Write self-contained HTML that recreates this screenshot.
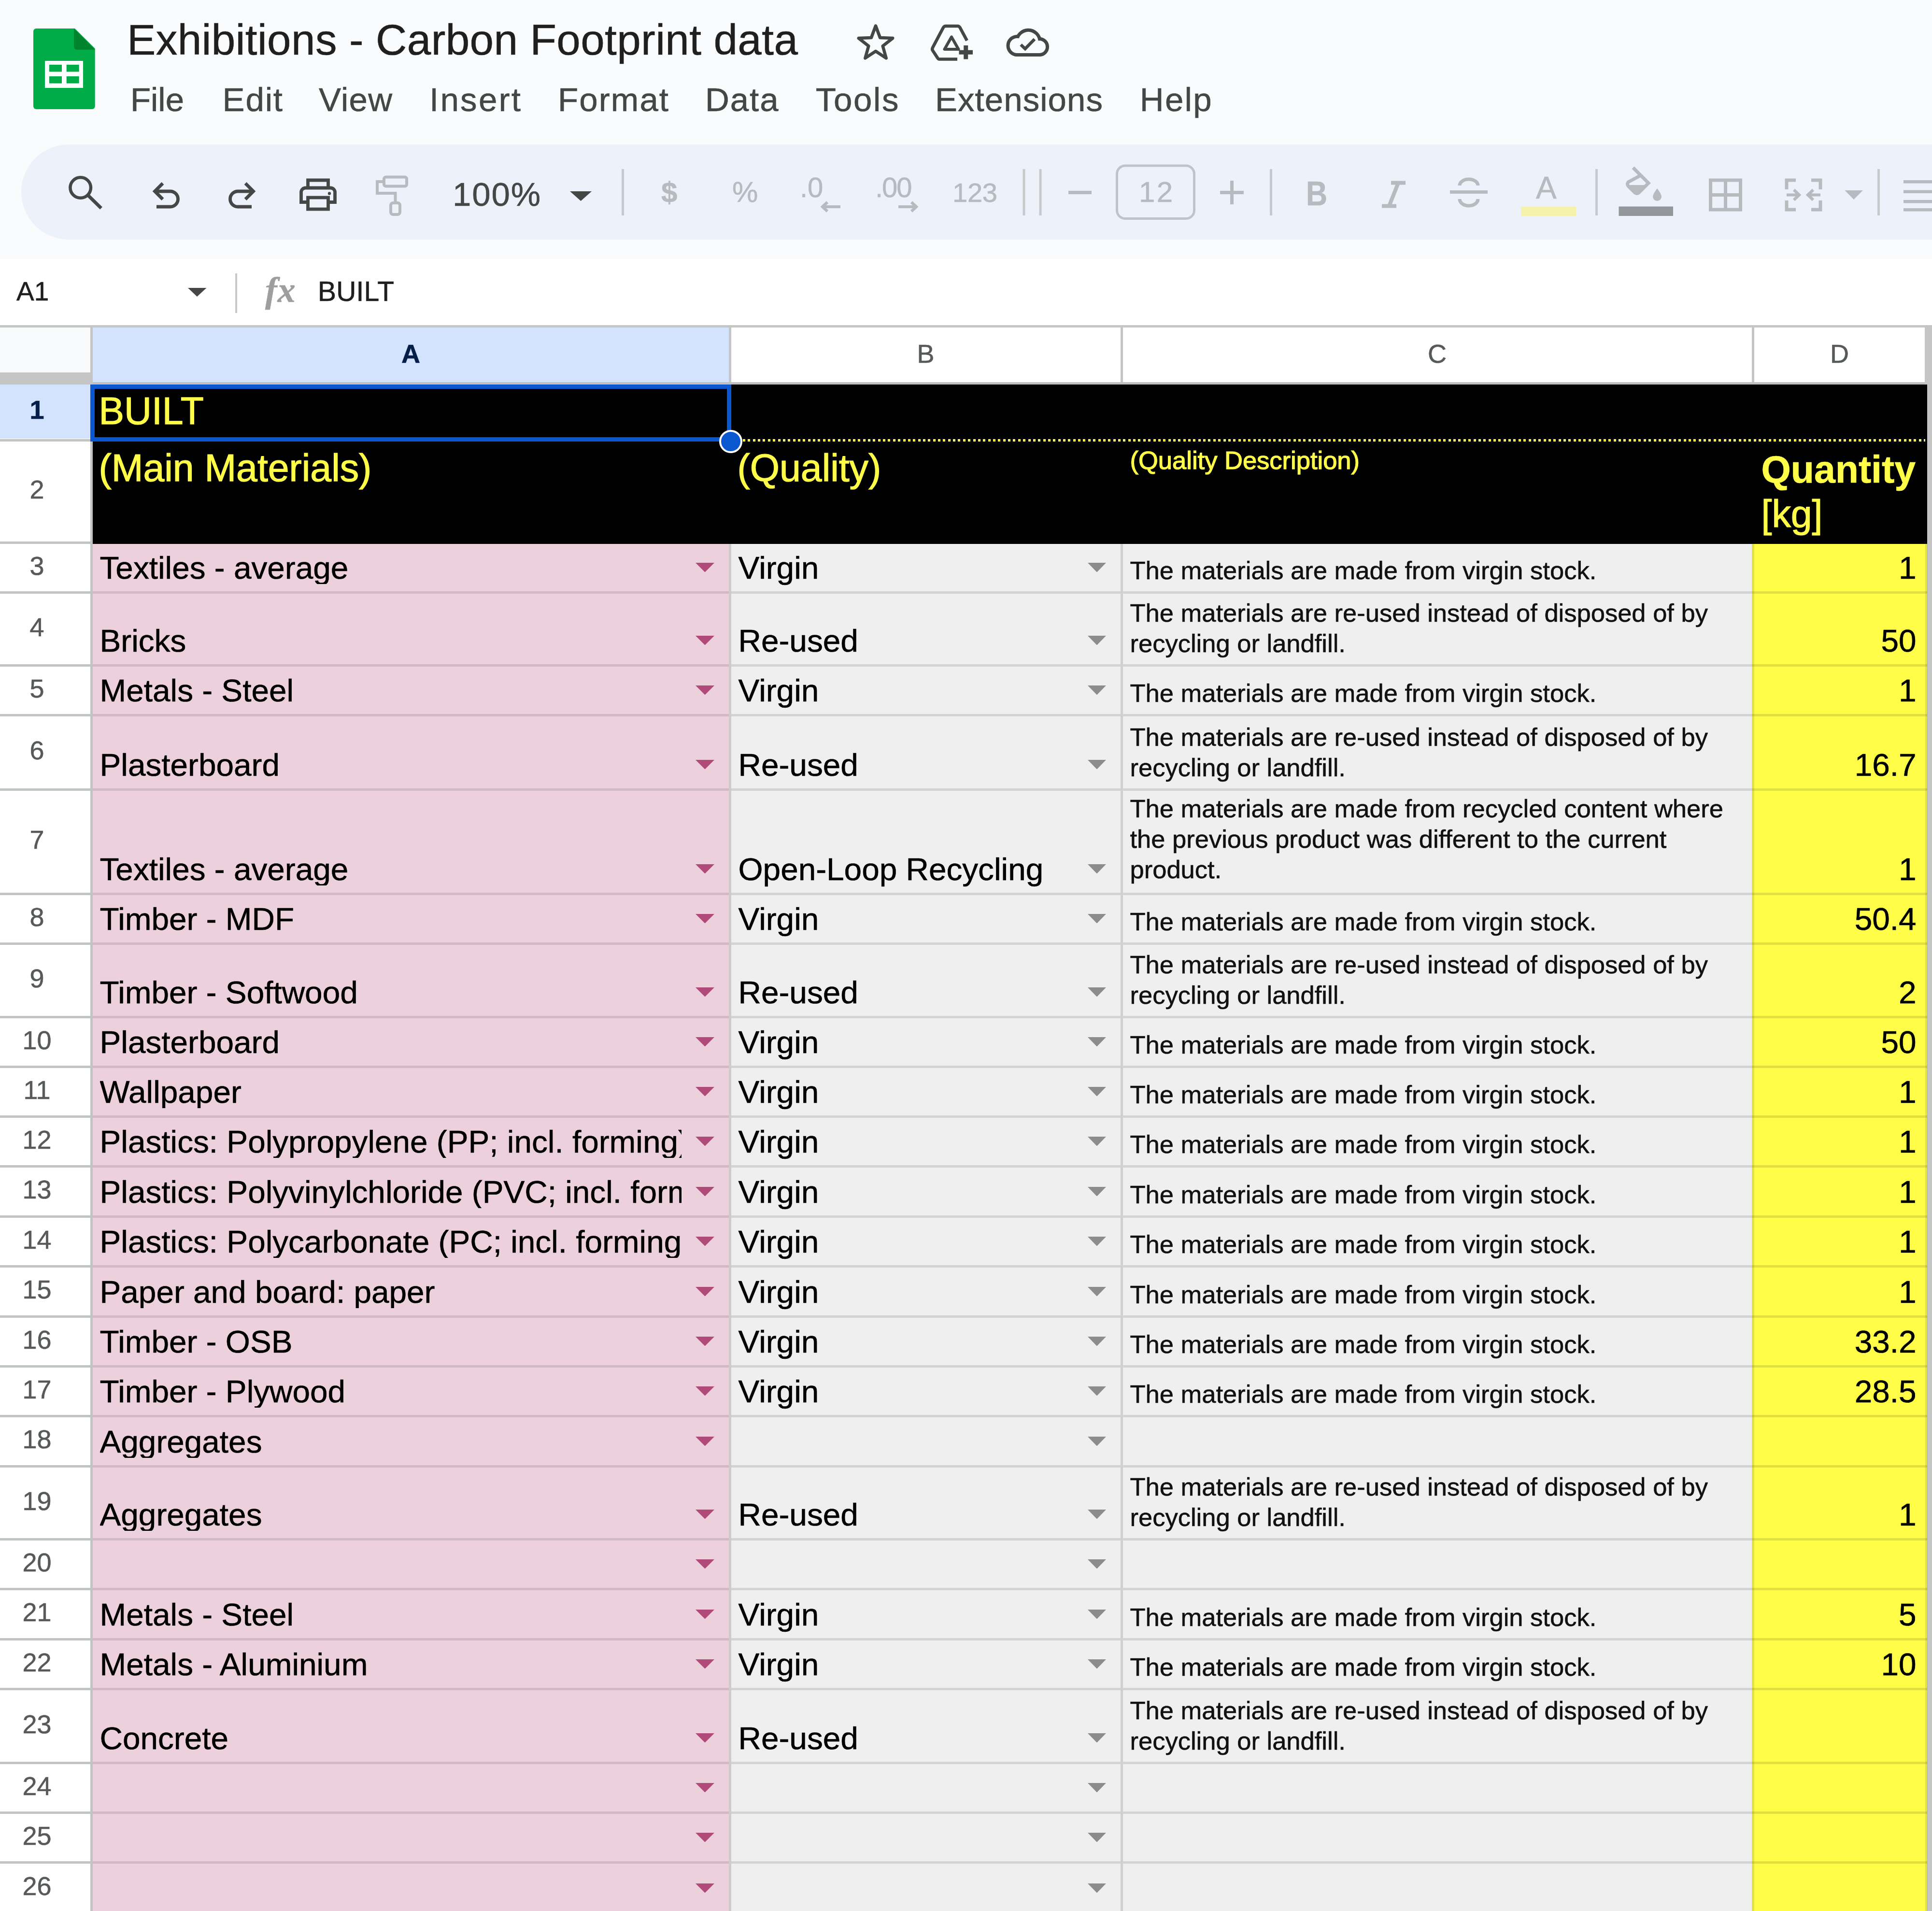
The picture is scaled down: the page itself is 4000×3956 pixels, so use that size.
<!DOCTYPE html>
<html><head><meta charset="utf-8"><title>Exhibitions - Carbon Footprint data</title>
<style>
html,body{margin:0;padding:0;}
body{width:4000px;height:3956px;overflow:hidden;position:relative;background:#fff;font-family:"Liberation Sans",sans-serif;}
.r{position:absolute;display:block;}
.t{position:absolute;white-space:nowrap;line-height:1;font-family:"Liberation Sans",sans-serif;-webkit-text-stroke:0.6px currentColor;}
</style></head><body>
<div class="r" style="left:0.0px;top:0.0px;width:4000.0px;height:535.5px;background:#f9fbfd;"></div>
<div class="r" style="left:44.0px;top:299.0px;width:4100.0px;height:197.0px;background:#edf2fa;border-radius:98.5px;"></div>
<svg class="r" style="left:60px;top:50px" width="150" height="190" viewBox="60 50 150 190">
<path d="M75 59 H155 L196.7 100.5 V220 a6 6 0 0 1 -6 6 H75 a6 6 0 0 1 -6 -6 V65 a6 6 0 0 1 6 -6 Z" fill="#00ac47"/>
<path d="M153 59 L196.7 102.8 H159 a6 6 0 0 1 -6 -6 Z" fill="#00832d"/>
<rect x="93" y="126" width="79" height="56" fill="#fff"/>
<rect x="102" y="134" width="26" height="14.5" fill="#00ac47"/>
<rect x="137.7" y="134" width="26" height="14.5" fill="#00ac47"/>
<rect x="102" y="158" width="26" height="14.5" fill="#00ac47"/>
<rect x="137.7" y="158" width="26" height="14.5" fill="#00ac47"/>
</svg>
<div class="t " style="top:37.7px;font-size:89px;color:#1f1f1f;left:263.0px;letter-spacing:0.40px;">Exhibitions - Carbon Footprint data</div>
<div class="t " style="top:171.6px;font-size:69px;color:#444746;left:270.0px;letter-spacing:-0.06px;">File</div>
<div class="t " style="top:171.6px;font-size:69px;color:#444746;left:460.5px;letter-spacing:1.87px;">Edit</div>
<div class="t " style="top:171.6px;font-size:69px;color:#444746;left:660.0px;letter-spacing:1.23px;">View</div>
<div class="t " style="top:171.6px;font-size:69px;color:#444746;left:889.0px;letter-spacing:3.29px;">Insert</div>
<div class="t " style="top:171.6px;font-size:69px;color:#444746;left:1155.0px;letter-spacing:2.10px;">Format</div>
<div class="t " style="top:171.6px;font-size:69px;color:#444746;left:1460.0px;letter-spacing:1.95px;">Data</div>
<div class="t " style="top:171.6px;font-size:69px;color:#444746;left:1688.7px;letter-spacing:2.71px;">Tools</div>
<div class="t " style="top:171.6px;font-size:69px;color:#444746;left:1936.0px;letter-spacing:1.05px;">Extensions</div>
<div class="t " style="top:171.6px;font-size:69px;color:#444746;left:2359.7px;letter-spacing:2.36px;">Help</div>
<svg class="r" style="left:0;top:0" width="4000" height="536" viewBox="0 0 4000 536"><path d="M1813.0 53.5 L1822.1 78.0 L1848.2 79.1 L1827.7 95.3 L1834.7 120.4 L1813.0 106.0 L1791.3 120.4 L1798.3 95.3 L1777.8 79.1 L1803.9 78.0 Z" fill="none" stroke="#444746" stroke-width="6.5" stroke-linejoin="round"/><path d="M2002 84 L1987.5 57 a6 6 0 0 0 -5 -3 H1958 a6 6 0 0 0 -5 3 L1931 98.5 a6 6 0 0 0 0 6 L1941.5 120.5 a4 4 0 0 0 3.5 2 H1982" fill="none" stroke="#444746" stroke-width="6.5" stroke-linejoin="round" stroke-linecap="butt"/><path d="M1970 76.5 L1955.5 102 H1984.5 Z" fill="none" stroke="#444746" stroke-width="6" stroke-linejoin="round"/><path d="M1999.7 94 V122.5 M1985.5 108.2 H2014" fill="none" stroke="#444746" stroke-width="9"/><g stroke="#444746" stroke-width="14" fill="#444746" stroke-linejoin="round"><circle cx="2106" cy="94.5" r="15.5"/><circle cx="2129" cy="86.5" r="20.7"/><circle cx="2152" cy="97" r="13"/><rect x="2106" y="95" width="46" height="15"/></g><g fill="#f9fbfd"><circle cx="2106" cy="94.5" r="15.5"/><circle cx="2129" cy="86.5" r="20.7"/><circle cx="2152" cy="97" r="13"/><rect x="2106" y="95" width="46" height="15"/></g><path d="M2113.5 92.5 L2122.5 101 L2142 81" fill="none" stroke="#444746" stroke-width="6.5"/><circle cx="166.7" cy="388.5" r="21.3" fill="none" stroke="#444746" stroke-width="6.5"/><path d="M182.5 404.5 L209.5 431" stroke="#444746" stroke-width="7"/><path d="M324 428 H352.5 a16 16 0 0 0 0 -32 H320" fill="none" stroke="#444746" stroke-width="6.8"/><path d="M337 379.5 L320.5 396 L337 412.5" fill="none" stroke="#444746" stroke-width="6.8"/><path d="M521 428 H492.5 a16 16 0 0 1 0 -32 H525" fill="none" stroke="#444746" stroke-width="6.8"/><path d="M508 379.5 L524.5 396 L508 412.5" fill="none" stroke="#444746" stroke-width="6.8"/><path d="M637.5 388 V373 H679.5 V388" fill="none" stroke="#444746" stroke-width="6.8"/><path d="M637.5 418.5 H623.5 V398 a9 9 0 0 1 9 -9 H684.5 a9 9 0 0 1 9 9 V418.5 H679.5" fill="none" stroke="#444746" stroke-width="6.8"/><rect x="637.5" y="409" width="42" height="24" fill="none" stroke="#444746" stroke-width="6.8"/><circle cx="682" cy="400.5" r="3.2" fill="#444746"/><rect x="795" y="366.5" width="47" height="19" rx="4" fill="none" stroke="#b7babf" stroke-width="6"/><path d="M795 376 H781 V400 H818.5 V419" fill="none" stroke="#b7babf" stroke-width="6"/><rect x="809" y="420" width="19" height="24" rx="5" fill="none" stroke="#b7babf" stroke-width="6"/><path d="M1180 396 L1225 396 L1202.5 416 Z" fill="#444746"/><rect x="1287.0" y="350" width="5" height="96" fill="#c7c9cc"/><rect x="2117.5" y="350" width="5" height="96" fill="#c7c9cc"/><rect x="2151.5" y="350" width="5" height="96" fill="#c7c9cc"/><rect x="2629.0" y="350" width="5" height="96" fill="#c7c9cc"/><rect x="3303.0" y="350" width="5" height="96" fill="#c7c9cc"/><rect x="3887.0" y="350" width="5" height="96" fill="#c7c9cc"/><path d="M1703 428 H1740 M1713 418.5 L1703 428 L1713 437.5" fill="none" stroke="#b7babf" stroke-width="6"/><path d="M1860 428 H1897 M1887 418.5 L1897 428 L1887 437.5" fill="none" stroke="#b7babf" stroke-width="6"/><rect x="2212" y="395" width="48" height="7" fill="#b7babf"/><rect x="2526" y="395" width="49" height="7" fill="#b7babf"/><rect x="2547" y="374" width="7" height="49" fill="#b7babf"/><rect x="2312.5" y="343" width="160" height="109.5" rx="17" fill="none" stroke="#c0c3c8" stroke-width="5"/><path d="M2880 378.5 H2910 M2861 426.5 H2891 M2895 378.5 L2876 426.5" fill="none" stroke="#b7babf" stroke-width="8"/><rect x="3002" y="394" width="78" height="7" fill="#b7babf"/><path d="M3060 384 a19 13 0 0 0 -38 0 M3022 412 a19 14 0 0 0 38 0" fill="none" stroke="#b7babf" stroke-width="7"/><rect x="3149" y="427.5" width="114" height="19.5" fill="#f4f3ae"/><rect x="3351.5" y="427.5" width="112.5" height="19.5" fill="#93969a"/><path d="M3381 347 L3413 379 L3393 399 a6 6 0 0 1 -8 0 L3371 385 a6 6 0 0 1 0 -8 L3397 363" fill="none" stroke="#b7babf" stroke-width="7"/><path d="M3372 383 H3411 L3391 402 Z" fill="#b7babf"/><path d="M3431 390 q9 12 9 17 a9 9 0 0 1 -18 0 q0 -5 9 -17 Z" fill="#b7babf"/><rect x="3541.5" y="373" width="62" height="61" fill="none" stroke="#b7babf" stroke-width="7"/><path d="M3572.5 373 V434 M3541.5 403.5 H3603.5" stroke="#b7babf" stroke-width="7"/><path d="M3718 373 H3699 V392 M3699 415 V434 H3718 M3750 373 H3769 V392 M3769 415 V434 H3750" fill="none" stroke="#b7babf" stroke-width="7"/><path d="M3699 403.5 H3724 M3714 393 L3725 403.5 L3714 414 M3769 403.5 H3744 M3754 393 L3743 403.5 L3754 414" fill="none" stroke="#b7babf" stroke-width="6"/><path d="M3819.5 394 H3857 L3838 413 Z" fill="#b7babf"/><rect x="3941" y="373" width="70" height="6.5" fill="#b7babf"/><rect x="3941" y="393.5" width="70" height="6.5" fill="#b7babf"/><rect x="3941" y="414" width="70" height="6.5" fill="#b7babf"/><rect x="3941" y="431" width="70" height="6.5" fill="#b7babf"/></svg>
<div class="t " style="top:367.6px;font-size:69px;color:#444746;left:937.0px;letter-spacing:1.84px;">100%</div>
<div class="t " style="top:369.2px;font-size:60px;color:#b7babf;left:1369.0px;font-weight:bold;">$</div>
<div class="t " style="top:368.2px;font-size:60px;color:#b7babf;left:1516.0px;">%</div>
<div class="t " style="top:358.9px;font-size:58px;color:#b7babf;left:1656.0px;">.0</div>
<div class="t " style="top:358.9px;font-size:58px;color:#b7babf;left:1812.0px;letter-spacing:-2.00px;">.00</div>
<div class="t " style="top:370.6px;font-size:56px;color:#b7babf;left:1972.0px;letter-spacing:-0.22px;">123</div>
<div class="t " style="top:368.2px;font-size:60px;color:#b7babf;left:2358.0px;letter-spacing:3.26px;">12</div>
<div class="t " style="top:364.9px;font-size:71px;color:#b7babf;left:2704.0px;font-weight:bold;transform:scaleX(0.86);transform-origin:0 0;">B</div>
<div class="t " style="top:356.8px;font-size:64px;color:#b7babf;left:3180.0px;">A</div>
<div class="r" style="left:0.0px;top:535.5px;width:4000.0px;height:138.0px;background:#fff;"></div>
<div class="t " style="top:575.9px;font-size:55px;color:#1f1f1f;left:34.0px;">A1</div>
<svg class="r" style="left:380px;top:590px" width="60" height="30" viewBox="380 590 60 30"><path d="M389 596 H427.5 L408 614 Z" fill="#444746"/></svg>
<div class="r" style="left:486.5px;top:565.5px;width:4.5px;height:82.5px;background:#c7c7c7;"></div>
<div class="t " style="top:563.4px;font-size:74px;color:#9e9e9e;left:549.0px;font-weight:bold;font-style:italic;font-family:'Liberation Serif',serif;letter-spacing:1px;">fx</div>
<div class="t " style="top:575.2px;font-size:57px;color:#1f1f1f;left:658.0px;letter-spacing:0.17px;">BUILT</div>
<div class="r" style="left:0.0px;top:673.0px;width:4000.0px;height:5.0px;background:#c4c7c5;"></div>
<div class="r" style="left:0.0px;top:678.0px;width:187.0px;height:93.0px;background:#f8f9fa;"></div>
<div class="r" style="left:0.0px;top:771.0px;width:192.0px;height:24.5px;background:#c5c5c5;"></div>
<div class="r" style="left:187.0px;top:678.0px;width:5.0px;height:117.0px;background:#c5c5c5;"></div>
<div class="r" style="left:191.5px;top:678.0px;width:1317.0px;height:113.0px;background:#d3e3fd;"></div>
<div class="r" style="left:1513.5px;top:678.0px;width:806.0px;height:113.0px;background:#fff;"></div>
<div class="r" style="left:2324.5px;top:678.0px;width:1302.5px;height:113.0px;background:#fff;"></div>
<div class="r" style="left:3631.5px;top:678.0px;width:354.0px;height:113.0px;background:#fff;"></div>
<div class="r" style="left:1508.5px;top:678.0px;width:5.0px;height:113.0px;background:#c5c5c5;"></div>
<div class="r" style="left:2319.5px;top:678.0px;width:5.0px;height:113.0px;background:#c5c5c5;"></div>
<div class="r" style="left:3627.0px;top:678.0px;width:5.0px;height:113.0px;background:#c5c5c5;"></div>
<div class="r" style="left:191.5px;top:790.5px;width:4000.0px;height:5.5px;background:#c0c0c0;"></div>
<div class="r" style="left:3984.5px;top:673.0px;width:20.0px;height:3300.0px;background:#c5c5c5;"></div>
<div class="t " style="top:705.3px;font-size:54px;color:#041e49;left:831.0px;font-weight:bold;">A</div>
<div class="t " style="top:705.3px;font-size:54px;color:#575a5a;left:1898.5px;">B</div>
<div class="t " style="top:705.3px;font-size:54px;color:#575a5a;left:2956.0px;">C</div>
<div class="t " style="top:705.3px;font-size:54px;color:#575a5a;left:3789.0px;">D</div>
<div class="r" style="left:0.0px;top:796.0px;width:187.0px;height:112.0px;background:#d3e3fd;"></div>
<div class="r" style="left:0.0px;top:909.0px;width:187.0px;height:5.0px;background:#c0c4c2;"></div>
<div class="t " style="top:821.3px;font-size:54px;color:#041e49;left:61.5px;font-weight:bold;">1</div>
<div class="r" style="left:191.5px;top:796.0px;width:3798.5px;height:118.0px;background:#000;"></div>
<div class="r" style="left:0.0px;top:914.0px;width:187.0px;height:207.0px;background:#fff;"></div>
<div class="r" style="left:0.0px;top:1121.0px;width:187.0px;height:5.0px;background:#c0c4c2;"></div>
<div class="t " style="top:986.3px;font-size:54px;color:#575a5a;left:61.5px;">2</div>
<div class="r" style="left:191.5px;top:914.0px;width:3798.5px;height:212.0px;background:#000;"></div>
<div class="r" style="left:0.0px;top:1126.0px;width:187.0px;height:98.0px;background:#fff;"></div>
<div class="r" style="left:0.0px;top:1224.0px;width:187.0px;height:5.0px;background:#c0c4c2;"></div>
<div class="t " style="top:1143.8px;font-size:54px;color:#575a5a;left:61.5px;">3</div>
<div class="r" style="left:191.5px;top:1126.0px;width:1322.0px;height:103.0px;background:#ecd1dc;"></div>
<div class="r" style="left:1513.5px;top:1126.0px;width:2113.5px;height:103.0px;background:#efefef;"></div>
<div class="r" style="left:3627.0px;top:1126.0px;width:363.0px;height:103.0px;background:#fffd47;"></div>
<div class="r" style="left:191.5px;top:1224.0px;width:3798.5px;height:5.0px;background:rgba(0,0,0,0.115);"></div>
<div class="t " style="top:1143.4px;font-size:65.7px;color:#000;left:206.5px;width:1204.0px;overflow:hidden;">Textiles - average</div>
<div class="t " style="top:1143.4px;font-size:65.7px;color:#000;left:1528.5px;">Virgin</div>
<div class="t " style="top:1154.6px;font-size:52.5px;color:#111;left:2339.5px;">The materials are made from virgin stock.</div>
<div class="t " style="top:1143.4px;font-size:65.7px;color:#000;right:32.5px;">1</div>
<svg class="r" style="left:1440px;top:1164.5px" width="39" height="19.5" viewBox="0 0 39 19.5"><path d="M0 0 H39 L19.5 19.5 Z" fill="#b04a78"/></svg>
<svg class="r" style="left:2251.5px;top:1164.5px" width="38" height="19.5" viewBox="0 0 38 19.5"><path d="M0 0 H38 L19 19.5 Z" fill="#8c8c8c"/></svg>
<div class="r" style="left:0.0px;top:1229.0px;width:187.0px;height:146.0px;background:#fff;"></div>
<div class="r" style="left:0.0px;top:1375.0px;width:187.0px;height:5.0px;background:#c0c4c2;"></div>
<div class="t " style="top:1270.8px;font-size:54px;color:#575a5a;left:61.5px;">4</div>
<div class="r" style="left:191.5px;top:1229.0px;width:1322.0px;height:151.0px;background:#ecd1dc;"></div>
<div class="r" style="left:1513.5px;top:1229.0px;width:2113.5px;height:151.0px;background:#efefef;"></div>
<div class="r" style="left:3627.0px;top:1229.0px;width:363.0px;height:151.0px;background:#fffd47;"></div>
<div class="r" style="left:191.5px;top:1375.0px;width:3798.5px;height:5.0px;background:rgba(0,0,0,0.115);"></div>
<div class="t " style="top:1294.4px;font-size:65.7px;color:#000;left:206.5px;width:1204.0px;overflow:hidden;">Bricks</div>
<div class="t " style="top:1294.4px;font-size:65.7px;color:#000;left:1528.5px;">Re-used</div>
<div class="t " style="top:1242.6px;font-size:52.5px;color:#111;left:2339.5px;">The materials are re-used instead of disposed of by</div>
<div class="t " style="top:1305.6px;font-size:52.5px;color:#111;left:2339.5px;">recycling or landfill.</div>
<div class="t " style="top:1294.4px;font-size:65.7px;color:#000;right:32.5px;">50</div>
<svg class="r" style="left:1440px;top:1315.5px" width="39" height="19.5" viewBox="0 0 39 19.5"><path d="M0 0 H39 L19.5 19.5 Z" fill="#b04a78"/></svg>
<svg class="r" style="left:2251.5px;top:1315.5px" width="38" height="19.5" viewBox="0 0 38 19.5"><path d="M0 0 H38 L19 19.5 Z" fill="#8c8c8c"/></svg>
<div class="r" style="left:0.0px;top:1380.0px;width:187.0px;height:98.0px;background:#fff;"></div>
<div class="r" style="left:0.0px;top:1478.0px;width:187.0px;height:5.0px;background:#c0c4c2;"></div>
<div class="t " style="top:1397.8px;font-size:54px;color:#575a5a;left:61.5px;">5</div>
<div class="r" style="left:191.5px;top:1380.0px;width:1322.0px;height:103.0px;background:#ecd1dc;"></div>
<div class="r" style="left:1513.5px;top:1380.0px;width:2113.5px;height:103.0px;background:#efefef;"></div>
<div class="r" style="left:3627.0px;top:1380.0px;width:363.0px;height:103.0px;background:#fffd47;"></div>
<div class="r" style="left:191.5px;top:1478.0px;width:3798.5px;height:5.0px;background:rgba(0,0,0,0.115);"></div>
<div class="t " style="top:1397.4px;font-size:65.7px;color:#000;left:206.5px;width:1204.0px;overflow:hidden;">Metals - Steel</div>
<div class="t " style="top:1397.4px;font-size:65.7px;color:#000;left:1528.5px;">Virgin</div>
<div class="t " style="top:1408.6px;font-size:52.5px;color:#111;left:2339.5px;">The materials are made from virgin stock.</div>
<div class="t " style="top:1397.4px;font-size:65.7px;color:#000;right:32.5px;">1</div>
<svg class="r" style="left:1440px;top:1418.5px" width="39" height="19.5" viewBox="0 0 39 19.5"><path d="M0 0 H39 L19.5 19.5 Z" fill="#b04a78"/></svg>
<svg class="r" style="left:2251.5px;top:1418.5px" width="38" height="19.5" viewBox="0 0 38 19.5"><path d="M0 0 H38 L19 19.5 Z" fill="#8c8c8c"/></svg>
<div class="r" style="left:0.0px;top:1483.0px;width:187.0px;height:149.0px;background:#fff;"></div>
<div class="r" style="left:0.0px;top:1632.0px;width:187.0px;height:5.0px;background:#c0c4c2;"></div>
<div class="t " style="top:1526.3px;font-size:54px;color:#575a5a;left:61.5px;">6</div>
<div class="r" style="left:191.5px;top:1483.0px;width:1322.0px;height:154.0px;background:#ecd1dc;"></div>
<div class="r" style="left:1513.5px;top:1483.0px;width:2113.5px;height:154.0px;background:#efefef;"></div>
<div class="r" style="left:3627.0px;top:1483.0px;width:363.0px;height:154.0px;background:#fffd47;"></div>
<div class="r" style="left:191.5px;top:1632.0px;width:3798.5px;height:5.0px;background:rgba(0,0,0,0.115);"></div>
<div class="t " style="top:1551.4px;font-size:65.7px;color:#000;left:206.5px;width:1204.0px;overflow:hidden;">Plasterboard</div>
<div class="t " style="top:1551.4px;font-size:65.7px;color:#000;left:1528.5px;">Re-used</div>
<div class="t " style="top:1499.6px;font-size:52.5px;color:#111;left:2339.5px;">The materials are re-used instead of disposed of by</div>
<div class="t " style="top:1562.6px;font-size:52.5px;color:#111;left:2339.5px;">recycling or landfill.</div>
<div class="t " style="top:1551.4px;font-size:65.7px;color:#000;right:32.5px;">16.7</div>
<svg class="r" style="left:1440px;top:1572.5px" width="39" height="19.5" viewBox="0 0 39 19.5"><path d="M0 0 H39 L19.5 19.5 Z" fill="#b04a78"/></svg>
<svg class="r" style="left:2251.5px;top:1572.5px" width="38" height="19.5" viewBox="0 0 38 19.5"><path d="M0 0 H38 L19 19.5 Z" fill="#8c8c8c"/></svg>
<div class="r" style="left:0.0px;top:1637.0px;width:187.0px;height:211.0px;background:#fff;"></div>
<div class="r" style="left:0.0px;top:1848.0px;width:187.0px;height:5.0px;background:#c0c4c2;"></div>
<div class="t " style="top:1711.3px;font-size:54px;color:#575a5a;left:61.5px;">7</div>
<div class="r" style="left:191.5px;top:1637.0px;width:1322.0px;height:216.0px;background:#ecd1dc;"></div>
<div class="r" style="left:1513.5px;top:1637.0px;width:2113.5px;height:216.0px;background:#efefef;"></div>
<div class="r" style="left:3627.0px;top:1637.0px;width:363.0px;height:216.0px;background:#fffd47;"></div>
<div class="r" style="left:191.5px;top:1848.0px;width:3798.5px;height:5.0px;background:rgba(0,0,0,0.115);"></div>
<div class="t " style="top:1767.4px;font-size:65.7px;color:#000;left:206.5px;width:1204.0px;overflow:hidden;">Textiles - average</div>
<div class="t " style="top:1767.4px;font-size:65.7px;color:#000;left:1528.5px;">Open-Loop Recycling</div>
<div class="t " style="top:1647.6px;font-size:52.5px;color:#111;left:2339.5px;">The materials are made from recycled content where</div>
<div class="t " style="top:1710.6px;font-size:52.5px;color:#111;left:2339.5px;">the previous product was different to the current</div>
<div class="t " style="top:1773.6px;font-size:52.5px;color:#111;left:2339.5px;">product.</div>
<div class="t " style="top:1767.4px;font-size:65.7px;color:#000;right:32.5px;">1</div>
<svg class="r" style="left:1440px;top:1788.5px" width="39" height="19.5" viewBox="0 0 39 19.5"><path d="M0 0 H39 L19.5 19.5 Z" fill="#b04a78"/></svg>
<svg class="r" style="left:2251.5px;top:1788.5px" width="38" height="19.5" viewBox="0 0 38 19.5"><path d="M0 0 H38 L19 19.5 Z" fill="#8c8c8c"/></svg>
<div class="r" style="left:0.0px;top:1853.0px;width:187.0px;height:98.0px;background:#fff;"></div>
<div class="r" style="left:0.0px;top:1951.0px;width:187.0px;height:5.0px;background:#c0c4c2;"></div>
<div class="t " style="top:1870.8px;font-size:54px;color:#575a5a;left:61.5px;">8</div>
<div class="r" style="left:191.5px;top:1853.0px;width:1322.0px;height:103.0px;background:#ecd1dc;"></div>
<div class="r" style="left:1513.5px;top:1853.0px;width:2113.5px;height:103.0px;background:#efefef;"></div>
<div class="r" style="left:3627.0px;top:1853.0px;width:363.0px;height:103.0px;background:#fffd47;"></div>
<div class="r" style="left:191.5px;top:1951.0px;width:3798.5px;height:5.0px;background:rgba(0,0,0,0.115);"></div>
<div class="t " style="top:1870.4px;font-size:65.7px;color:#000;left:206.5px;width:1204.0px;overflow:hidden;">Timber - MDF</div>
<div class="t " style="top:1870.4px;font-size:65.7px;color:#000;left:1528.5px;">Virgin</div>
<div class="t " style="top:1881.6px;font-size:52.5px;color:#111;left:2339.5px;">The materials are made from virgin stock.</div>
<div class="t " style="top:1870.4px;font-size:65.7px;color:#000;right:32.5px;">50.4</div>
<svg class="r" style="left:1440px;top:1891.5px" width="39" height="19.5" viewBox="0 0 39 19.5"><path d="M0 0 H39 L19.5 19.5 Z" fill="#b04a78"/></svg>
<svg class="r" style="left:2251.5px;top:1891.5px" width="38" height="19.5" viewBox="0 0 38 19.5"><path d="M0 0 H38 L19 19.5 Z" fill="#8c8c8c"/></svg>
<div class="r" style="left:0.0px;top:1956.0px;width:187.0px;height:147.0px;background:#fff;"></div>
<div class="r" style="left:0.0px;top:2103.0px;width:187.0px;height:5.0px;background:#c0c4c2;"></div>
<div class="t " style="top:1998.3px;font-size:54px;color:#575a5a;left:61.5px;">9</div>
<div class="r" style="left:191.5px;top:1956.0px;width:1322.0px;height:152.0px;background:#ecd1dc;"></div>
<div class="r" style="left:1513.5px;top:1956.0px;width:2113.5px;height:152.0px;background:#efefef;"></div>
<div class="r" style="left:3627.0px;top:1956.0px;width:363.0px;height:152.0px;background:#fffd47;"></div>
<div class="r" style="left:191.5px;top:2103.0px;width:3798.5px;height:5.0px;background:rgba(0,0,0,0.115);"></div>
<div class="t " style="top:2022.4px;font-size:65.7px;color:#000;left:206.5px;width:1204.0px;overflow:hidden;">Timber - Softwood</div>
<div class="t " style="top:2022.4px;font-size:65.7px;color:#000;left:1528.5px;">Re-used</div>
<div class="t " style="top:1970.6px;font-size:52.5px;color:#111;left:2339.5px;">The materials are re-used instead of disposed of by</div>
<div class="t " style="top:2033.6px;font-size:52.5px;color:#111;left:2339.5px;">recycling or landfill.</div>
<div class="t " style="top:2022.4px;font-size:65.7px;color:#000;right:32.5px;">2</div>
<svg class="r" style="left:1440px;top:2043.5px" width="39" height="19.5" viewBox="0 0 39 19.5"><path d="M0 0 H39 L19.5 19.5 Z" fill="#b04a78"/></svg>
<svg class="r" style="left:2251.5px;top:2043.5px" width="38" height="19.5" viewBox="0 0 38 19.5"><path d="M0 0 H38 L19 19.5 Z" fill="#8c8c8c"/></svg>
<div class="r" style="left:0.0px;top:2108.0px;width:187.0px;height:98.0px;background:#fff;"></div>
<div class="r" style="left:0.0px;top:2206.0px;width:187.0px;height:5.0px;background:#c0c4c2;"></div>
<div class="t " style="top:2125.8px;font-size:54px;color:#575a5a;left:46.5px;">10</div>
<div class="r" style="left:191.5px;top:2108.0px;width:1322.0px;height:103.0px;background:#ecd1dc;"></div>
<div class="r" style="left:1513.5px;top:2108.0px;width:2113.5px;height:103.0px;background:#efefef;"></div>
<div class="r" style="left:3627.0px;top:2108.0px;width:363.0px;height:103.0px;background:#fffd47;"></div>
<div class="r" style="left:191.5px;top:2206.0px;width:3798.5px;height:5.0px;background:rgba(0,0,0,0.115);"></div>
<div class="t " style="top:2125.4px;font-size:65.7px;color:#000;left:206.5px;width:1204.0px;overflow:hidden;">Plasterboard</div>
<div class="t " style="top:2125.4px;font-size:65.7px;color:#000;left:1528.5px;">Virgin</div>
<div class="t " style="top:2136.6px;font-size:52.5px;color:#111;left:2339.5px;">The materials are made from virgin stock.</div>
<div class="t " style="top:2125.4px;font-size:65.7px;color:#000;right:32.5px;">50</div>
<svg class="r" style="left:1440px;top:2146.5px" width="39" height="19.5" viewBox="0 0 39 19.5"><path d="M0 0 H39 L19.5 19.5 Z" fill="#b04a78"/></svg>
<svg class="r" style="left:2251.5px;top:2146.5px" width="38" height="19.5" viewBox="0 0 38 19.5"><path d="M0 0 H38 L19 19.5 Z" fill="#8c8c8c"/></svg>
<div class="r" style="left:0.0px;top:2211.0px;width:187.0px;height:98.0px;background:#fff;"></div>
<div class="r" style="left:0.0px;top:2309.0px;width:187.0px;height:5.0px;background:#c0c4c2;"></div>
<div class="t " style="top:2228.8px;font-size:54px;color:#575a5a;left:48.5px;">11</div>
<div class="r" style="left:191.5px;top:2211.0px;width:1322.0px;height:103.0px;background:#ecd1dc;"></div>
<div class="r" style="left:1513.5px;top:2211.0px;width:2113.5px;height:103.0px;background:#efefef;"></div>
<div class="r" style="left:3627.0px;top:2211.0px;width:363.0px;height:103.0px;background:#fffd47;"></div>
<div class="r" style="left:191.5px;top:2309.0px;width:3798.5px;height:5.0px;background:rgba(0,0,0,0.115);"></div>
<div class="t " style="top:2228.4px;font-size:65.7px;color:#000;left:206.5px;width:1204.0px;overflow:hidden;">Wallpaper</div>
<div class="t " style="top:2228.4px;font-size:65.7px;color:#000;left:1528.5px;">Virgin</div>
<div class="t " style="top:2239.6px;font-size:52.5px;color:#111;left:2339.5px;">The materials are made from virgin stock.</div>
<div class="t " style="top:2228.4px;font-size:65.7px;color:#000;right:32.5px;">1</div>
<svg class="r" style="left:1440px;top:2249.5px" width="39" height="19.5" viewBox="0 0 39 19.5"><path d="M0 0 H39 L19.5 19.5 Z" fill="#b04a78"/></svg>
<svg class="r" style="left:2251.5px;top:2249.5px" width="38" height="19.5" viewBox="0 0 38 19.5"><path d="M0 0 H38 L19 19.5 Z" fill="#8c8c8c"/></svg>
<div class="r" style="left:0.0px;top:2314.0px;width:187.0px;height:98.0px;background:#fff;"></div>
<div class="r" style="left:0.0px;top:2412.0px;width:187.0px;height:5.0px;background:#c0c4c2;"></div>
<div class="t " style="top:2331.8px;font-size:54px;color:#575a5a;left:46.5px;">12</div>
<div class="r" style="left:191.5px;top:2314.0px;width:1322.0px;height:103.0px;background:#ecd1dc;"></div>
<div class="r" style="left:1513.5px;top:2314.0px;width:2113.5px;height:103.0px;background:#efefef;"></div>
<div class="r" style="left:3627.0px;top:2314.0px;width:363.0px;height:103.0px;background:#fffd47;"></div>
<div class="r" style="left:191.5px;top:2412.0px;width:3798.5px;height:5.0px;background:rgba(0,0,0,0.115);"></div>
<div class="t " style="top:2331.4px;font-size:65.7px;color:#000;left:206.5px;width:1204.0px;overflow:hidden;">Plastics: Polypropylene (PP; incl. forming)</div>
<div class="t " style="top:2331.4px;font-size:65.7px;color:#000;left:1528.5px;">Virgin</div>
<div class="t " style="top:2342.6px;font-size:52.5px;color:#111;left:2339.5px;">The materials are made from virgin stock.</div>
<div class="t " style="top:2331.4px;font-size:65.7px;color:#000;right:32.5px;">1</div>
<svg class="r" style="left:1440px;top:2352.5px" width="39" height="19.5" viewBox="0 0 39 19.5"><path d="M0 0 H39 L19.5 19.5 Z" fill="#b04a78"/></svg>
<svg class="r" style="left:2251.5px;top:2352.5px" width="38" height="19.5" viewBox="0 0 38 19.5"><path d="M0 0 H38 L19 19.5 Z" fill="#8c8c8c"/></svg>
<div class="r" style="left:0.0px;top:2417.0px;width:187.0px;height:99.0px;background:#fff;"></div>
<div class="r" style="left:0.0px;top:2516.0px;width:187.0px;height:5.0px;background:#c0c4c2;"></div>
<div class="t " style="top:2435.3px;font-size:54px;color:#575a5a;left:46.5px;">13</div>
<div class="r" style="left:191.5px;top:2417.0px;width:1322.0px;height:104.0px;background:#ecd1dc;"></div>
<div class="r" style="left:1513.5px;top:2417.0px;width:2113.5px;height:104.0px;background:#efefef;"></div>
<div class="r" style="left:3627.0px;top:2417.0px;width:363.0px;height:104.0px;background:#fffd47;"></div>
<div class="r" style="left:191.5px;top:2516.0px;width:3798.5px;height:5.0px;background:rgba(0,0,0,0.115);"></div>
<div class="t " style="top:2435.4px;font-size:65.7px;color:#000;left:206.5px;width:1204.0px;overflow:hidden;">Plastics: Polyvinylchloride (PVC; incl. forming)</div>
<div class="t " style="top:2435.4px;font-size:65.7px;color:#000;left:1528.5px;">Virgin</div>
<div class="t " style="top:2446.6px;font-size:52.5px;color:#111;left:2339.5px;">The materials are made from virgin stock.</div>
<div class="t " style="top:2435.4px;font-size:65.7px;color:#000;right:32.5px;">1</div>
<svg class="r" style="left:1440px;top:2456.5px" width="39" height="19.5" viewBox="0 0 39 19.5"><path d="M0 0 H39 L19.5 19.5 Z" fill="#b04a78"/></svg>
<svg class="r" style="left:2251.5px;top:2456.5px" width="38" height="19.5" viewBox="0 0 38 19.5"><path d="M0 0 H38 L19 19.5 Z" fill="#8c8c8c"/></svg>
<div class="r" style="left:0.0px;top:2521.0px;width:187.0px;height:98.0px;background:#fff;"></div>
<div class="r" style="left:0.0px;top:2619.0px;width:187.0px;height:5.0px;background:#c0c4c2;"></div>
<div class="t " style="top:2538.8px;font-size:54px;color:#575a5a;left:46.5px;">14</div>
<div class="r" style="left:191.5px;top:2521.0px;width:1322.0px;height:103.0px;background:#ecd1dc;"></div>
<div class="r" style="left:1513.5px;top:2521.0px;width:2113.5px;height:103.0px;background:#efefef;"></div>
<div class="r" style="left:3627.0px;top:2521.0px;width:363.0px;height:103.0px;background:#fffd47;"></div>
<div class="r" style="left:191.5px;top:2619.0px;width:3798.5px;height:5.0px;background:rgba(0,0,0,0.115);"></div>
<div class="t " style="top:2538.4px;font-size:65.7px;color:#000;left:206.5px;width:1204.0px;overflow:hidden;">Plastics: Polycarbonate (PC; incl. forming)</div>
<div class="t " style="top:2538.4px;font-size:65.7px;color:#000;left:1528.5px;">Virgin</div>
<div class="t " style="top:2549.6px;font-size:52.5px;color:#111;left:2339.5px;">The materials are made from virgin stock.</div>
<div class="t " style="top:2538.4px;font-size:65.7px;color:#000;right:32.5px;">1</div>
<svg class="r" style="left:1440px;top:2559.5px" width="39" height="19.5" viewBox="0 0 39 19.5"><path d="M0 0 H39 L19.5 19.5 Z" fill="#b04a78"/></svg>
<svg class="r" style="left:2251.5px;top:2559.5px" width="38" height="19.5" viewBox="0 0 38 19.5"><path d="M0 0 H38 L19 19.5 Z" fill="#8c8c8c"/></svg>
<div class="r" style="left:0.0px;top:2624.0px;width:187.0px;height:99.0px;background:#fff;"></div>
<div class="r" style="left:0.0px;top:2723.0px;width:187.0px;height:5.0px;background:#c0c4c2;"></div>
<div class="t " style="top:2642.3px;font-size:54px;color:#575a5a;left:46.5px;">15</div>
<div class="r" style="left:191.5px;top:2624.0px;width:1322.0px;height:104.0px;background:#ecd1dc;"></div>
<div class="r" style="left:1513.5px;top:2624.0px;width:2113.5px;height:104.0px;background:#efefef;"></div>
<div class="r" style="left:3627.0px;top:2624.0px;width:363.0px;height:104.0px;background:#fffd47;"></div>
<div class="r" style="left:191.5px;top:2723.0px;width:3798.5px;height:5.0px;background:rgba(0,0,0,0.115);"></div>
<div class="t " style="top:2642.4px;font-size:65.7px;color:#000;left:206.5px;width:1204.0px;overflow:hidden;">Paper and board: paper</div>
<div class="t " style="top:2642.4px;font-size:65.7px;color:#000;left:1528.5px;">Virgin</div>
<div class="t " style="top:2653.6px;font-size:52.5px;color:#111;left:2339.5px;">The materials are made from virgin stock.</div>
<div class="t " style="top:2642.4px;font-size:65.7px;color:#000;right:32.5px;">1</div>
<svg class="r" style="left:1440px;top:2663.5px" width="39" height="19.5" viewBox="0 0 39 19.5"><path d="M0 0 H39 L19.5 19.5 Z" fill="#b04a78"/></svg>
<svg class="r" style="left:2251.5px;top:2663.5px" width="38" height="19.5" viewBox="0 0 38 19.5"><path d="M0 0 H38 L19 19.5 Z" fill="#8c8c8c"/></svg>
<div class="r" style="left:0.0px;top:2728.0px;width:187.0px;height:98.0px;background:#fff;"></div>
<div class="r" style="left:0.0px;top:2826.0px;width:187.0px;height:5.0px;background:#c0c4c2;"></div>
<div class="t " style="top:2745.8px;font-size:54px;color:#575a5a;left:46.5px;">16</div>
<div class="r" style="left:191.5px;top:2728.0px;width:1322.0px;height:103.0px;background:#ecd1dc;"></div>
<div class="r" style="left:1513.5px;top:2728.0px;width:2113.5px;height:103.0px;background:#efefef;"></div>
<div class="r" style="left:3627.0px;top:2728.0px;width:363.0px;height:103.0px;background:#fffd47;"></div>
<div class="r" style="left:191.5px;top:2826.0px;width:3798.5px;height:5.0px;background:rgba(0,0,0,0.115);"></div>
<div class="t " style="top:2745.4px;font-size:65.7px;color:#000;left:206.5px;width:1204.0px;overflow:hidden;">Timber - OSB</div>
<div class="t " style="top:2745.4px;font-size:65.7px;color:#000;left:1528.5px;">Virgin</div>
<div class="t " style="top:2756.6px;font-size:52.5px;color:#111;left:2339.5px;">The materials are made from virgin stock.</div>
<div class="t " style="top:2745.4px;font-size:65.7px;color:#000;right:32.5px;">33.2</div>
<svg class="r" style="left:1440px;top:2766.5px" width="39" height="19.5" viewBox="0 0 39 19.5"><path d="M0 0 H39 L19.5 19.5 Z" fill="#b04a78"/></svg>
<svg class="r" style="left:2251.5px;top:2766.5px" width="38" height="19.5" viewBox="0 0 38 19.5"><path d="M0 0 H38 L19 19.5 Z" fill="#8c8c8c"/></svg>
<div class="r" style="left:0.0px;top:2831.0px;width:187.0px;height:98.0px;background:#fff;"></div>
<div class="r" style="left:0.0px;top:2929.0px;width:187.0px;height:5.0px;background:#c0c4c2;"></div>
<div class="t " style="top:2848.8px;font-size:54px;color:#575a5a;left:46.5px;">17</div>
<div class="r" style="left:191.5px;top:2831.0px;width:1322.0px;height:103.0px;background:#ecd1dc;"></div>
<div class="r" style="left:1513.5px;top:2831.0px;width:2113.5px;height:103.0px;background:#efefef;"></div>
<div class="r" style="left:3627.0px;top:2831.0px;width:363.0px;height:103.0px;background:#fffd47;"></div>
<div class="r" style="left:191.5px;top:2929.0px;width:3798.5px;height:5.0px;background:rgba(0,0,0,0.115);"></div>
<div class="t " style="top:2848.4px;font-size:65.7px;color:#000;left:206.5px;width:1204.0px;overflow:hidden;">Timber - Plywood</div>
<div class="t " style="top:2848.4px;font-size:65.7px;color:#000;left:1528.5px;">Virgin</div>
<div class="t " style="top:2859.6px;font-size:52.5px;color:#111;left:2339.5px;">The materials are made from virgin stock.</div>
<div class="t " style="top:2848.4px;font-size:65.7px;color:#000;right:32.5px;">28.5</div>
<svg class="r" style="left:1440px;top:2869.5px" width="39" height="19.5" viewBox="0 0 39 19.5"><path d="M0 0 H39 L19.5 19.5 Z" fill="#b04a78"/></svg>
<svg class="r" style="left:2251.5px;top:2869.5px" width="38" height="19.5" viewBox="0 0 38 19.5"><path d="M0 0 H38 L19 19.5 Z" fill="#8c8c8c"/></svg>
<div class="r" style="left:0.0px;top:2934.0px;width:187.0px;height:99.0px;background:#fff;"></div>
<div class="r" style="left:0.0px;top:3033.0px;width:187.0px;height:5.0px;background:#c0c4c2;"></div>
<div class="t " style="top:2952.3px;font-size:54px;color:#575a5a;left:46.5px;">18</div>
<div class="r" style="left:191.5px;top:2934.0px;width:1322.0px;height:104.0px;background:#ecd1dc;"></div>
<div class="r" style="left:1513.5px;top:2934.0px;width:2113.5px;height:104.0px;background:#efefef;"></div>
<div class="r" style="left:3627.0px;top:2934.0px;width:363.0px;height:104.0px;background:#fffd47;"></div>
<div class="r" style="left:191.5px;top:3033.0px;width:3798.5px;height:5.0px;background:rgba(0,0,0,0.115);"></div>
<div class="t " style="top:2952.4px;font-size:65.7px;color:#000;left:206.5px;width:1204.0px;overflow:hidden;">Aggregates</div>
<svg class="r" style="left:1440px;top:2973.5px" width="39" height="19.5" viewBox="0 0 39 19.5"><path d="M0 0 H39 L19.5 19.5 Z" fill="#b04a78"/></svg>
<svg class="r" style="left:2251.5px;top:2973.5px" width="38" height="19.5" viewBox="0 0 38 19.5"><path d="M0 0 H38 L19 19.5 Z" fill="#8c8c8c"/></svg>
<div class="r" style="left:0.0px;top:3038.0px;width:187.0px;height:146.0px;background:#fff;"></div>
<div class="r" style="left:0.0px;top:3184.0px;width:187.0px;height:5.0px;background:#c0c4c2;"></div>
<div class="t " style="top:3079.8px;font-size:54px;color:#575a5a;left:46.5px;">19</div>
<div class="r" style="left:191.5px;top:3038.0px;width:1322.0px;height:151.0px;background:#ecd1dc;"></div>
<div class="r" style="left:1513.5px;top:3038.0px;width:2113.5px;height:151.0px;background:#efefef;"></div>
<div class="r" style="left:3627.0px;top:3038.0px;width:363.0px;height:151.0px;background:#fffd47;"></div>
<div class="r" style="left:191.5px;top:3184.0px;width:3798.5px;height:5.0px;background:rgba(0,0,0,0.115);"></div>
<div class="t " style="top:3103.4px;font-size:65.7px;color:#000;left:206.5px;width:1204.0px;overflow:hidden;">Aggregates</div>
<div class="t " style="top:3103.4px;font-size:65.7px;color:#000;left:1528.5px;">Re-used</div>
<div class="t " style="top:3051.6px;font-size:52.5px;color:#111;left:2339.5px;">The materials are re-used instead of disposed of by</div>
<div class="t " style="top:3114.6px;font-size:52.5px;color:#111;left:2339.5px;">recycling or landfill.</div>
<div class="t " style="top:3103.4px;font-size:65.7px;color:#000;right:32.5px;">1</div>
<svg class="r" style="left:1440px;top:3124.5px" width="39" height="19.5" viewBox="0 0 39 19.5"><path d="M0 0 H39 L19.5 19.5 Z" fill="#b04a78"/></svg>
<svg class="r" style="left:2251.5px;top:3124.5px" width="38" height="19.5" viewBox="0 0 38 19.5"><path d="M0 0 H38 L19 19.5 Z" fill="#8c8c8c"/></svg>
<div class="r" style="left:0.0px;top:3189.0px;width:187.0px;height:98.0px;background:#fff;"></div>
<div class="r" style="left:0.0px;top:3287.0px;width:187.0px;height:5.0px;background:#c0c4c2;"></div>
<div class="t " style="top:3206.8px;font-size:54px;color:#575a5a;left:46.5px;">20</div>
<div class="r" style="left:191.5px;top:3189.0px;width:1322.0px;height:103.0px;background:#ecd1dc;"></div>
<div class="r" style="left:1513.5px;top:3189.0px;width:2113.5px;height:103.0px;background:#efefef;"></div>
<div class="r" style="left:3627.0px;top:3189.0px;width:363.0px;height:103.0px;background:#fffd47;"></div>
<div class="r" style="left:191.5px;top:3287.0px;width:3798.5px;height:5.0px;background:rgba(0,0,0,0.115);"></div>
<svg class="r" style="left:1440px;top:3227.5px" width="39" height="19.5" viewBox="0 0 39 19.5"><path d="M0 0 H39 L19.5 19.5 Z" fill="#b04a78"/></svg>
<svg class="r" style="left:2251.5px;top:3227.5px" width="38" height="19.5" viewBox="0 0 38 19.5"><path d="M0 0 H38 L19 19.5 Z" fill="#8c8c8c"/></svg>
<div class="r" style="left:0.0px;top:3292.0px;width:187.0px;height:99.0px;background:#fff;"></div>
<div class="r" style="left:0.0px;top:3391.0px;width:187.0px;height:5.0px;background:#c0c4c2;"></div>
<div class="t " style="top:3310.3px;font-size:54px;color:#575a5a;left:46.5px;">21</div>
<div class="r" style="left:191.5px;top:3292.0px;width:1322.0px;height:104.0px;background:#ecd1dc;"></div>
<div class="r" style="left:1513.5px;top:3292.0px;width:2113.5px;height:104.0px;background:#efefef;"></div>
<div class="r" style="left:3627.0px;top:3292.0px;width:363.0px;height:104.0px;background:#fffd47;"></div>
<div class="r" style="left:191.5px;top:3391.0px;width:3798.5px;height:5.0px;background:rgba(0,0,0,0.115);"></div>
<div class="t " style="top:3310.4px;font-size:65.7px;color:#000;left:206.5px;width:1204.0px;overflow:hidden;">Metals - Steel</div>
<div class="t " style="top:3310.4px;font-size:65.7px;color:#000;left:1528.5px;">Virgin</div>
<div class="t " style="top:3321.6px;font-size:52.5px;color:#111;left:2339.5px;">The materials are made from virgin stock.</div>
<div class="t " style="top:3310.4px;font-size:65.7px;color:#000;right:32.5px;">5</div>
<svg class="r" style="left:1440px;top:3331.5px" width="39" height="19.5" viewBox="0 0 39 19.5"><path d="M0 0 H39 L19.5 19.5 Z" fill="#b04a78"/></svg>
<svg class="r" style="left:2251.5px;top:3331.5px" width="38" height="19.5" viewBox="0 0 38 19.5"><path d="M0 0 H38 L19 19.5 Z" fill="#8c8c8c"/></svg>
<div class="r" style="left:0.0px;top:3396.0px;width:187.0px;height:98.0px;background:#fff;"></div>
<div class="r" style="left:0.0px;top:3494.0px;width:187.0px;height:5.0px;background:#c0c4c2;"></div>
<div class="t " style="top:3413.8px;font-size:54px;color:#575a5a;left:46.5px;">22</div>
<div class="r" style="left:191.5px;top:3396.0px;width:1322.0px;height:103.0px;background:#ecd1dc;"></div>
<div class="r" style="left:1513.5px;top:3396.0px;width:2113.5px;height:103.0px;background:#efefef;"></div>
<div class="r" style="left:3627.0px;top:3396.0px;width:363.0px;height:103.0px;background:#fffd47;"></div>
<div class="r" style="left:191.5px;top:3494.0px;width:3798.5px;height:5.0px;background:rgba(0,0,0,0.115);"></div>
<div class="t " style="top:3413.4px;font-size:65.7px;color:#000;left:206.5px;width:1204.0px;overflow:hidden;">Metals - Aluminium</div>
<div class="t " style="top:3413.4px;font-size:65.7px;color:#000;left:1528.5px;">Virgin</div>
<div class="t " style="top:3424.6px;font-size:52.5px;color:#111;left:2339.5px;">The materials are made from virgin stock.</div>
<div class="t " style="top:3413.4px;font-size:65.7px;color:#000;right:32.5px;">10</div>
<svg class="r" style="left:1440px;top:3434.5px" width="39" height="19.5" viewBox="0 0 39 19.5"><path d="M0 0 H39 L19.5 19.5 Z" fill="#b04a78"/></svg>
<svg class="r" style="left:2251.5px;top:3434.5px" width="38" height="19.5" viewBox="0 0 38 19.5"><path d="M0 0 H38 L19 19.5 Z" fill="#8c8c8c"/></svg>
<div class="r" style="left:0.0px;top:3499.0px;width:187.0px;height:148.0px;background:#fff;"></div>
<div class="r" style="left:0.0px;top:3647.0px;width:187.0px;height:5.0px;background:#c0c4c2;"></div>
<div class="t " style="top:3541.8px;font-size:54px;color:#575a5a;left:46.5px;">23</div>
<div class="r" style="left:191.5px;top:3499.0px;width:1322.0px;height:153.0px;background:#ecd1dc;"></div>
<div class="r" style="left:1513.5px;top:3499.0px;width:2113.5px;height:153.0px;background:#efefef;"></div>
<div class="r" style="left:3627.0px;top:3499.0px;width:363.0px;height:153.0px;background:#fffd47;"></div>
<div class="r" style="left:191.5px;top:3647.0px;width:3798.5px;height:5.0px;background:rgba(0,0,0,0.115);"></div>
<div class="t " style="top:3566.4px;font-size:65.7px;color:#000;left:206.5px;width:1204.0px;overflow:hidden;">Concrete</div>
<div class="t " style="top:3566.4px;font-size:65.7px;color:#000;left:1528.5px;">Re-used</div>
<div class="t " style="top:3514.6px;font-size:52.5px;color:#111;left:2339.5px;">The materials are re-used instead of disposed of by</div>
<div class="t " style="top:3577.6px;font-size:52.5px;color:#111;left:2339.5px;">recycling or landfill.</div>
<svg class="r" style="left:1440px;top:3587.5px" width="39" height="19.5" viewBox="0 0 39 19.5"><path d="M0 0 H39 L19.5 19.5 Z" fill="#b04a78"/></svg>
<svg class="r" style="left:2251.5px;top:3587.5px" width="38" height="19.5" viewBox="0 0 38 19.5"><path d="M0 0 H38 L19 19.5 Z" fill="#8c8c8c"/></svg>
<div class="r" style="left:0.0px;top:3652.0px;width:187.0px;height:98.0px;background:#fff;"></div>
<div class="r" style="left:0.0px;top:3750.0px;width:187.0px;height:5.0px;background:#c0c4c2;"></div>
<div class="t " style="top:3669.8px;font-size:54px;color:#575a5a;left:46.5px;">24</div>
<div class="r" style="left:191.5px;top:3652.0px;width:1322.0px;height:103.0px;background:#ecd1dc;"></div>
<div class="r" style="left:1513.5px;top:3652.0px;width:2113.5px;height:103.0px;background:#efefef;"></div>
<div class="r" style="left:3627.0px;top:3652.0px;width:363.0px;height:103.0px;background:#fffd47;"></div>
<div class="r" style="left:191.5px;top:3750.0px;width:3798.5px;height:5.0px;background:rgba(0,0,0,0.115);"></div>
<svg class="r" style="left:1440px;top:3690.5px" width="39" height="19.5" viewBox="0 0 39 19.5"><path d="M0 0 H39 L19.5 19.5 Z" fill="#b04a78"/></svg>
<svg class="r" style="left:2251.5px;top:3690.5px" width="38" height="19.5" viewBox="0 0 38 19.5"><path d="M0 0 H38 L19 19.5 Z" fill="#8c8c8c"/></svg>
<div class="r" style="left:0.0px;top:3755.0px;width:187.0px;height:98.0px;background:#fff;"></div>
<div class="r" style="left:0.0px;top:3853.0px;width:187.0px;height:5.0px;background:#c0c4c2;"></div>
<div class="t " style="top:3772.8px;font-size:54px;color:#575a5a;left:46.5px;">25</div>
<div class="r" style="left:191.5px;top:3755.0px;width:1322.0px;height:103.0px;background:#ecd1dc;"></div>
<div class="r" style="left:1513.5px;top:3755.0px;width:2113.5px;height:103.0px;background:#efefef;"></div>
<div class="r" style="left:3627.0px;top:3755.0px;width:363.0px;height:103.0px;background:#fffd47;"></div>
<div class="r" style="left:191.5px;top:3853.0px;width:3798.5px;height:5.0px;background:rgba(0,0,0,0.115);"></div>
<svg class="r" style="left:1440px;top:3793.5px" width="39" height="19.5" viewBox="0 0 39 19.5"><path d="M0 0 H39 L19.5 19.5 Z" fill="#b04a78"/></svg>
<svg class="r" style="left:2251.5px;top:3793.5px" width="38" height="19.5" viewBox="0 0 38 19.5"><path d="M0 0 H38 L19 19.5 Z" fill="#8c8c8c"/></svg>
<div class="r" style="left:0.0px;top:3858.0px;width:187.0px;height:100.0px;background:#fff;"></div>
<div class="r" style="left:0.0px;top:3958.0px;width:187.0px;height:5.0px;background:#c0c4c2;"></div>
<div class="t " style="top:3876.8px;font-size:54px;color:#575a5a;left:46.5px;">26</div>
<div class="r" style="left:191.5px;top:3858.0px;width:1322.0px;height:105.0px;background:#ecd1dc;"></div>
<div class="r" style="left:1513.5px;top:3858.0px;width:2113.5px;height:105.0px;background:#efefef;"></div>
<div class="r" style="left:3627.0px;top:3858.0px;width:363.0px;height:105.0px;background:#fffd47;"></div>
<div class="r" style="left:191.5px;top:3958.0px;width:3798.5px;height:5.0px;background:rgba(0,0,0,0.115);"></div>
<svg class="r" style="left:1440px;top:3898.5px" width="39" height="19.5" viewBox="0 0 39 19.5"><path d="M0 0 H39 L19.5 19.5 Z" fill="#b04a78"/></svg>
<svg class="r" style="left:2251.5px;top:3898.5px" width="38" height="19.5" viewBox="0 0 38 19.5"><path d="M0 0 H38 L19 19.5 Z" fill="#8c8c8c"/></svg>
<div class="r" style="left:187.0px;top:796.0px;width:5.0px;height:3200.0px;background:#c0c4c2;"></div>
<div class="r" style="left:1508.5px;top:1126.0px;width:5.0px;height:2834.0px;background:#cccccc;"></div>
<div class="r" style="left:2319.5px;top:1126.0px;width:5.0px;height:2834.0px;background:#d0d0d0;"></div>
<div class="r" style="left:3627.0px;top:1126.0px;width:5.0px;height:2834.0px;background:rgba(0,0,0,0.10);"></div>
<div class="r" style="left:3985.5px;top:1126.0px;width:5.0px;height:2834.0px;background:rgba(0,0,0,0.10);"></div>
<div class="t " style="top:811.6px;font-size:78.8px;color:#fffd47;left:204.5px;-webkit-text-stroke:1.2px currentColor;">BUILT</div>
<div class="t " style="top:929.7px;font-size:78.8px;color:#fffd47;left:204.5px;-webkit-text-stroke:1.2px currentColor;">(Main Materials)</div>
<div class="t " style="top:929.7px;font-size:78.8px;color:#fffd47;left:1526.5px;-webkit-text-stroke:1.2px currentColor;">(Quality)</div>
<div class="t " style="top:926.6px;font-size:52.5px;color:#fffd47;left:2339.5px;-webkit-text-stroke:1.2px currentColor;">(Quality Description)</div>
<div class="t " style="top:933.3px;font-size:78.8px;color:#fffd47;left:3646.5px;font-weight:bold;">Quantity</div>
<div class="t " style="top:1025.3px;font-size:78.8px;color:#fffd47;left:3646.5px;-webkit-text-stroke:1.2px currentColor;">[kg]</div>
<div class="r" style="left:1538px;top:909px;width:2447.5px;height:5px;background:repeating-linear-gradient(90deg,#fffd47 0,#fffd47 5px,transparent 5px,transparent 10.36px);"></div>
<div class="r" style="left:187px;top:795.5px;width:1308.5px;height:100.5px;border:9px solid #0b57d0;box-sizing:content-box;"></div>
<div class="r" style="left:1489px;top:889.5px;width:40px;height:40px;border-radius:50%;background:#0b57d0;border:4.5px solid #fff;"></div>
</body></html>
